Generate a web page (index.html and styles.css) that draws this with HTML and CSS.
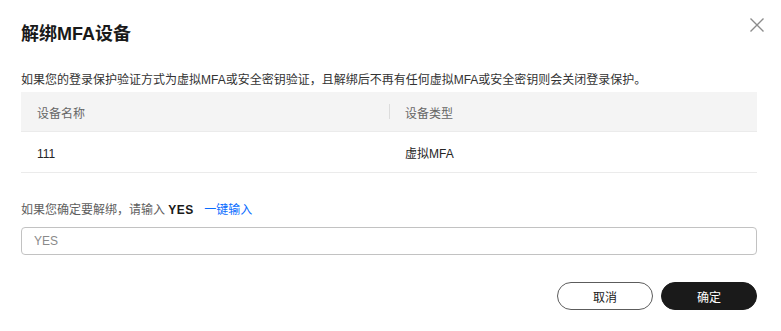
FILE: index.html
```html
<!DOCTYPE html>
<html lang="zh-CN">
<head>
  <meta charset="UTF-8" />
  <meta name="viewport" content="width=device-width, initial-scale=1" />
  <title>解绑MFA设备</title>
  <link rel="stylesheet" href="styles.css">
</head>
<body>

<div class="dialogo" role="dialog" aria-labelledby="titulo">
  <button class="cerrar-btn" aria-label="关闭">
    <svg width="20" height="20" viewBox="0 0 20 20" aria-hidden="true">
      <path d="M3.5 3.5 L16.5 16.5 M16.5 3.5 L3.5 16.5" stroke="#8c8c8c" stroke-width="1.4" fill="none" />
    </svg>
  </button>

  <h2 id="titulo">解绑MFA设备</h2>

  <p class="aviso">如果您的登录保护验证方式为虚拟MFA或安全密钥验证，且解绑后不再有任何虚拟MFA或安全密钥则会关闭登录保护。</p>

  <div class="tabla">
    <div class="fila cabecera">
      <div class="celda">设备名称</div>
      <div class="celda con-divisor">设备类型</div>
    </div>
    <div class="fila">
      <div class="celda">111</div>
      <div class="celda">虚拟MFA</div>
    </div>
  </div>

  <p class="confirmar">如果您确定要解绑，请输入 <b>YES</b> <a href="#" class="enlace">一键输入</a></p>
  <input type="text" class="campo" placeholder="YES" aria-label="输入YES" />

  <div class="acciones">
    <button class="btn btn-cancelar">取消</button>
    <button class="btn btn-aceptar">确定</button>
  </div>
</div>

</body>
</html>
```

FILE: styles.css
```css
body {
  margin: 0; background: #fff; color: #191919;
  font-family: 'Liberation Sans', 'Noto Sans CJK SC', sans-serif;
}
.dialogo {
  position: relative; padding: 22px 24px 21px 21px;
}
.cerrar-btn {
  position: absolute; top: 15px; right: 14px;
  width: 20px; height: 20px; padding: 0; border: none; background: none;
  cursor: pointer; display: flex;
}
h2 {
  margin: 0; font-size: 18px; line-height: 24px; font-weight: 700; color: #191919;
}
.aviso {
  margin: 25px 0 3px; font-size: 12px; line-height: 18px; color: #333;
}
.tabla {
  font-size: 12px; line-height: 18px;
}
.fila {
  display: grid; grid-template-columns: 1fr 1fr;
  border-bottom: 1px solid #ebebeb;
}
.celda {
  padding: 13px 16px 9px; color: #252525; position: relative;
}
.cabecera { background: #f4f4f4; }
.cabecera .celda { color: #666; padding: 13px 16px 8px; }
.con-divisor::before {
  content: ''; position: absolute; left: 0; top: 12px;
  width: 1px; height: 15px; background: #dcdcdc;
}
.confirmar {
  margin: 28px 0 8px; font-size: 12px; line-height: 18px; color: #5e5e5e;
}
.confirmar b { color: #191919; letter-spacing: 0.5px; margin-right: 7px; }
.enlace { color: #0a6cff; text-decoration: none; }
.campo {
  display: block; box-sizing: border-box; width: 100%; height: 28px; margin: 0;
  padding: 0 12px; font: inherit; font-size: 12px; color: #191919;
  border: 1px solid #c2c2c2; border-radius: 4px; outline: none;
}
.campo::placeholder { color: #8a8a8a; }
.acciones {
  display: flex; justify-content: flex-end; gap: 8px; margin-top: 27px;
}
.btn {
  width: 96px; height: 28px; border-radius: 14px; font: inherit; font-size: 12px;
  cursor: pointer; padding: 0;
}
.btn-cancelar { background: #fff; border: 1px solid #5c5c5c; color: #191919; }
.btn-aceptar { background: #1a1a1a; border: 1px solid #1a1a1a; color: #fff; }
```
